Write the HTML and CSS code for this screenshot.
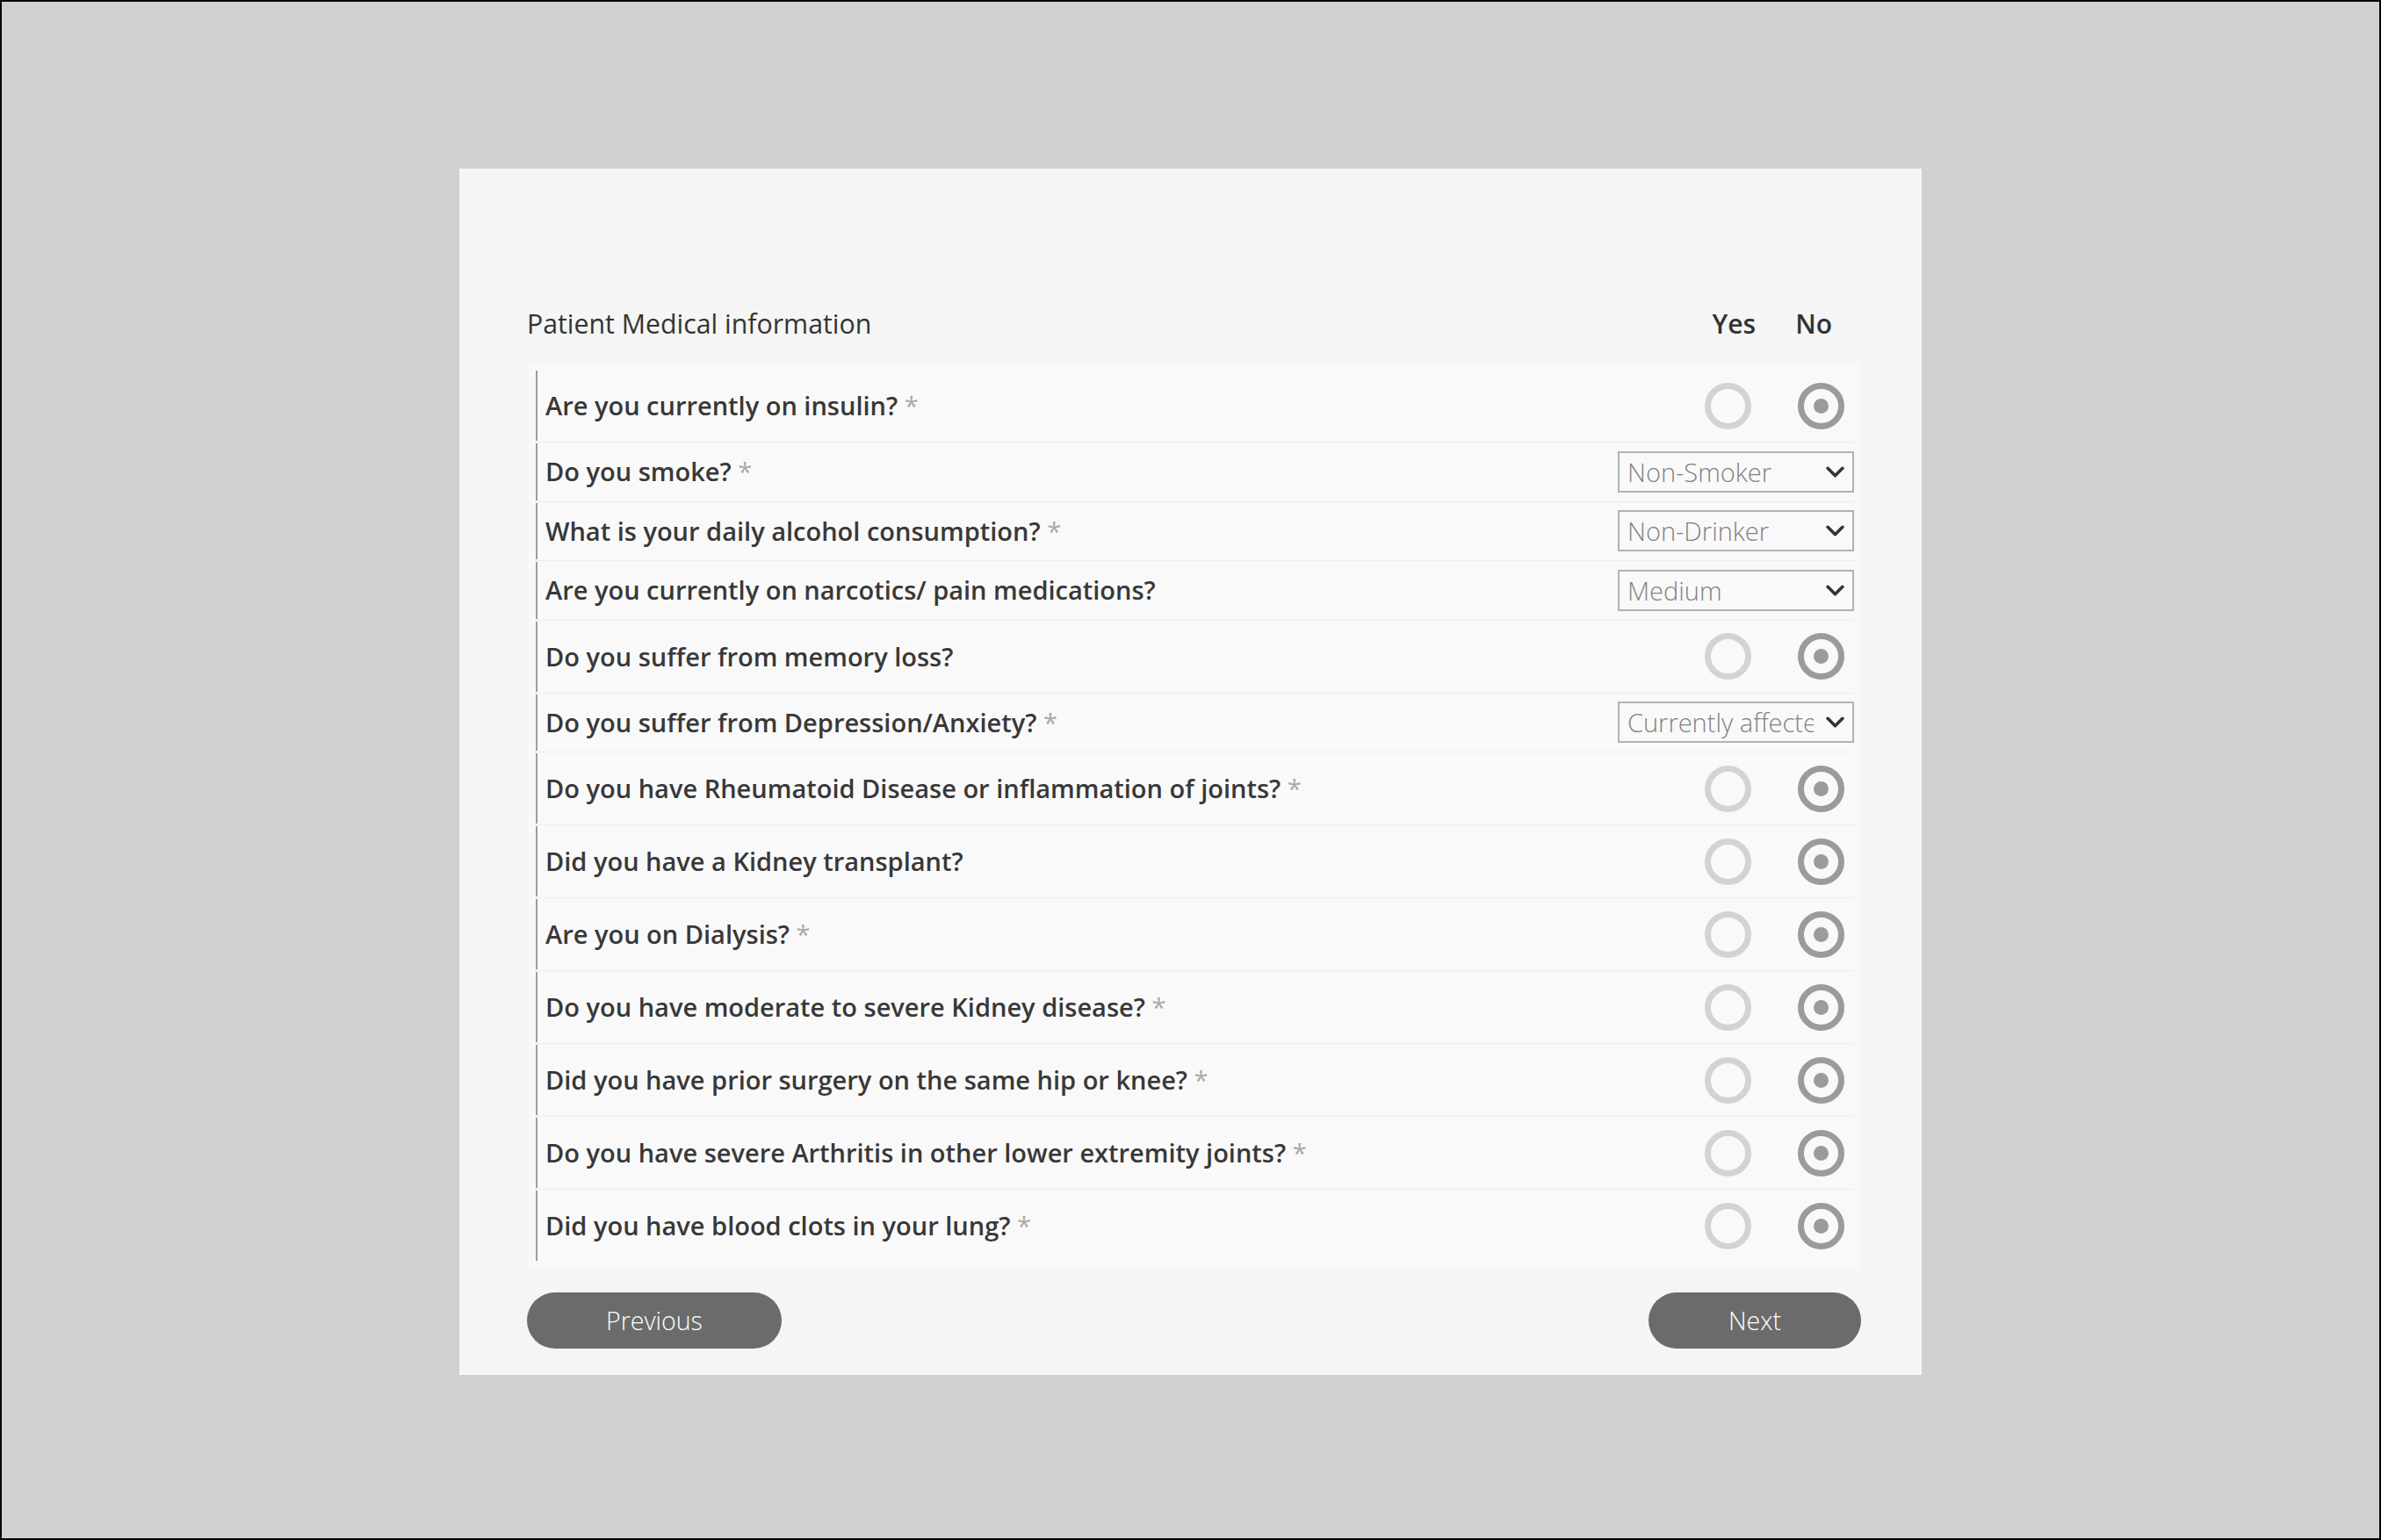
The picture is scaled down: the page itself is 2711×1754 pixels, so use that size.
FILE: index.html
```html
<!DOCTYPE html>
<html lang="en">
<head>
<meta charset="utf-8">
<title>Patient Medical information</title>
<link rel="stylesheet" href="styles.css">
</head>
<body>
<div class="frame">
  <main class="card">
    <div class="header">
      <div class="title">Patient Medical information</div>
      <div class="yn"><span class="yes">Yes</span><span class="no">No</span></div>
    </div>

    <div class="panel">
      <div class="row radio-row">
        <label class="q">Are you currently on insulin? <span class="req">*</span></label>
        <div class="radios"><input type="radio" name="q1" class="rd"><input type="radio" name="q1" class="rd" checked></div>
      </div>
      <div class="row select-row">
        <label class="q">Do you smoke? <span class="req">*</span></label>
        <div class="sel"><select><option>Non-Smoker</option></select><svg class="chev" viewBox="0 0 20 12"><polyline points="2,2 10,10 18,2"/></svg></div>
      </div>
      <div class="row select-row">
        <label class="q">What is your daily alcohol consumption? <span class="req">*</span></label>
        <div class="sel"><select><option>Non-Drinker</option></select><svg class="chev" viewBox="0 0 20 12"><polyline points="2,2 10,10 18,2"/></svg></div>
      </div>
      <div class="row select-row">
        <label class="q">Are you currently on narcotics/ pain medications?</label>
        <div class="sel"><select><option>Medium</option></select><svg class="chev" viewBox="0 0 20 12"><polyline points="2,2 10,10 18,2"/></svg></div>
      </div>
      <div class="row radio-row">
        <label class="q">Do you suffer from memory loss?</label>
        <div class="radios"><input type="radio" name="q5" class="rd"><input type="radio" name="q5" class="rd" checked></div>
      </div>
      <div class="row select-row">
        <label class="q">Do you suffer from Depression/Anxiety? <span class="req">*</span></label>
        <div class="sel"><select><option>Currently affected</option></select><svg class="chev" viewBox="0 0 20 12"><polyline points="2,2 10,10 18,2"/></svg></div>
      </div>
      <div class="row radio-row">
        <label class="q">Do you have Rheumatoid Disease or inflammation of joints? <span class="req">*</span></label>
        <div class="radios"><input type="radio" name="q7" class="rd"><input type="radio" name="q7" class="rd" checked></div>
      </div>
      <div class="row radio-row">
        <label class="q">Did you have a Kidney transplant?</label>
        <div class="radios"><input type="radio" name="q8" class="rd"><input type="radio" name="q8" class="rd" checked></div>
      </div>
      <div class="row radio-row">
        <label class="q">Are you on Dialysis? <span class="req">*</span></label>
        <div class="radios"><input type="radio" name="q9" class="rd"><input type="radio" name="q9" class="rd" checked></div>
      </div>
      <div class="row radio-row">
        <label class="q">Do you have moderate to severe Kidney disease? <span class="req">*</span></label>
        <div class="radios"><input type="radio" name="q10" class="rd"><input type="radio" name="q10" class="rd" checked></div>
      </div>
      <div class="row radio-row">
        <label class="q">Did you have prior surgery on the same hip or knee? <span class="req">*</span></label>
        <div class="radios"><input type="radio" name="q11" class="rd"><input type="radio" name="q11" class="rd" checked></div>
      </div>
      <div class="row radio-row">
        <label class="q">Do you have severe Arthritis in other lower extremity joints? <span class="req">*</span></label>
        <div class="radios"><input type="radio" name="q12" class="rd"><input type="radio" name="q12" class="rd" checked></div>
      </div>
      <div class="row radio-row">
        <label class="q">Did you have blood clots in your lung? <span class="req">*</span></label>
        <div class="radios"><input type="radio" name="q13" class="rd"><input type="radio" name="q13" class="rd" checked></div>
      </div>
    </div>

    <div class="actions">
      <button class="btn prev">Previous</button>
      <button class="btn next">Next</button>
    </div>
  </main>
</div>
</body>
</html>
```

FILE: styles.css
```css
html, body {
  margin: 0;
  padding: 0;
}
body {
  font-family: "Open Sans", "Noto Sans", "Liberation Sans", sans-serif;
  color: #333;
}
.frame {
  height: 100vh;
  box-sizing: border-box;
  border: 2px solid #000;
  background: #d0d0d0;
  padding-top: 190px;
}
.card {
  width: 1665px;
  box-sizing: border-box;
  margin: 0 auto;
  background: #f5f5f5;
  padding: 157px 69px 30px 77px;
}
.header {
  display: flex;
  align-items: center;
  justify-content: space-between;
  height: 40px;
}
.title {
  font-size: 30.3px;
  line-height: 40px;
  font-weight: 500;
  color: #333;
}
.yn {
  display: flex;
  font-size: 30px;
  line-height: 40px;
  font-weight: 600;
  color: #333;
  margin-right: 33px;
}
.yn .no {
  margin-left: 45px;
}
.panel {
  margin-top: 23px;
  background: #f8f8f8;
  padding: 10px 8px 10px 10px;
}
.row {
  display: flex;
  align-items: center;
  justify-content: space-between;
  border-left: 2px solid #9d9d9d;
  background: #f9f9f9;
  padding-left: 9px;
  position: relative;
}
.row + .row {
  margin-top: 3px;
}
.row + .row::before {
  content: "";
  position: absolute;
  left: -2px;
  right: 0;
  top: -2px;
  height: 1px;
  background: #eeeeee;
}
.radio-row {
  height: 80px;
}
.select-row {
  height: 64.5px;
}
.q {
  font-size: 29px;
  line-height: 40px;
  font-weight: 600;
  color: #383838;
}
.req {
  color: #a8a8a8;
  font-weight: 400;
}
.radios {
  display: flex;
  gap: 53px;
  margin-right: 11px;
}
.rd {
  appearance: none;
  -webkit-appearance: none;
  margin: 0;
  width: 53px;
  height: 53px;
  box-sizing: border-box;
  border-radius: 50%;
  border: 7px solid #d3d3d3;
  background: transparent;
  display: grid;
  place-items: center;
}
.rd:checked {
  border-color: #9b9b9b;
}
.rd:checked::after {
  content: "";
  width: 17px;
  height: 17px;
  border-radius: 50%;
  background: #9b9b9b;
}
.sel {
  position: relative;
  width: 269px;
  height: 47px;
}
.sel select {
  appearance: none;
  -webkit-appearance: none;
  width: 100%;
  height: 100%;
  box-sizing: border-box;
  border: 2px solid #b2b2b2;
  border-radius: 0;
  background: #f9f9f9;
  font-family: "Open Sans", "Noto Sans", "Liberation Sans", sans-serif;
  font-size: 29px;
  font-weight: 300;
  color: #828282;
  padding: 0 44px 0 9px;
  margin: 0;
  outline: none;
}
.chev {
  position: absolute;
  right: 11px;
  top: 17px;
  width: 21px;
  height: 13px;
  pointer-events: none;
}
.chev polyline {
  fill: none;
  stroke: #333;
  stroke-width: 3.4;
  stroke-linecap: round;
  stroke-linejoin: round;
}
.actions {
  display: flex;
  justify-content: space-between;
  margin-top: 26px;
}
.btn {
  height: 64px;
  border: none;
  border-radius: 32px;
  background: #6b6b6b;
  color: #fff;
  font-family: "Open Sans", "Noto Sans", "Liberation Sans", sans-serif;
  font-size: 28.5px;
  font-weight: 300;
  padding: 0;
  cursor: pointer;
}
.prev {
  width: 290px;
}
.next {
  width: 242px;
}
```
